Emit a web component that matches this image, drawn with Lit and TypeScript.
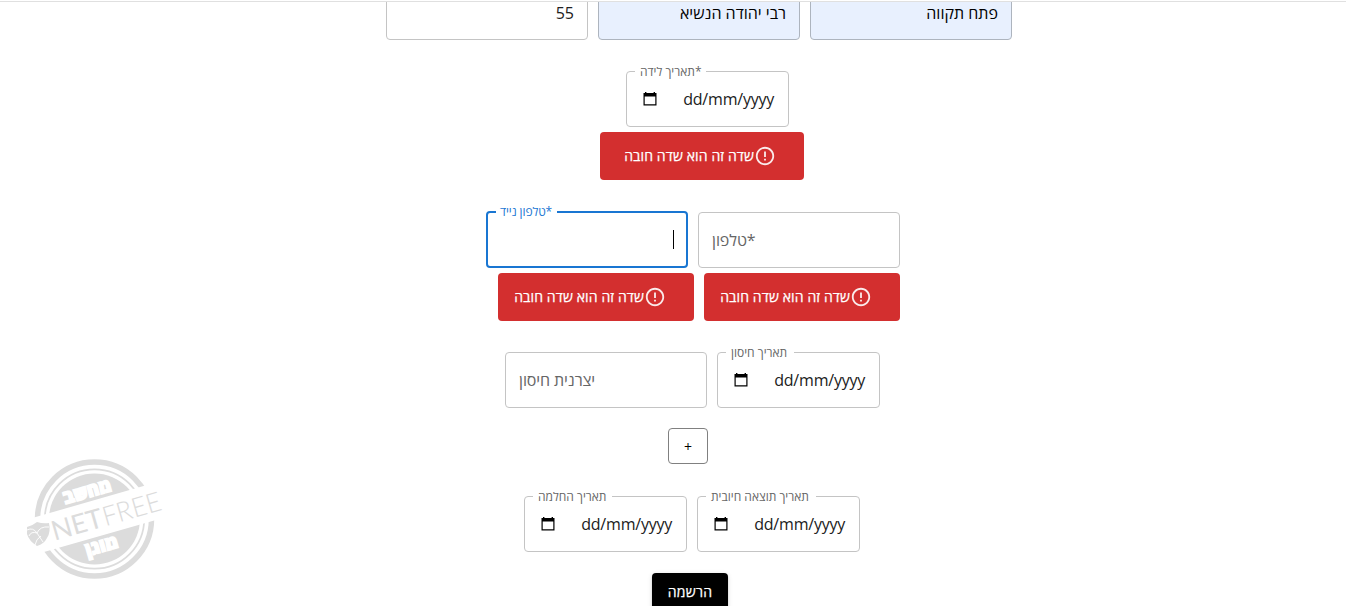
import { LitElement, html, svg, css, nothing } from "lit";
import { customElement, property } from "lit/decorators.js";

@customElement("form-field")
class FormField extends LitElement {
  @property() label = "";
  @property() value = "";
  @property() kind = "text";
  @property() gap = "";
  static styles = css`
    :host { display: block; }
    .box { position: relative; box-sizing: border-box; width: 202px; height: 56px; border: 1px solid #c4c4c4; border-radius: 4px; display: flex; align-items: center; padding: 0 13px; font-size: 16px; color: #212121; background: #fff; }
    .value { margin-left: auto; direction: rtl; line-height: 24px; white-space: nowrap; padding-top: 1px; }
    .filled { background: #e8f0fe; border-color: #adb4be; color: #000; }
    .date { width: 163px; padding: 0 14px 0 15px; }
    .date .value { letter-spacing: -.2px; margin-right: -.2px; direction: ltr; padding: 0 0 1px; }
    .focus { border: 2px solid #1976d2; height: 57px; margin-top: -1px; padding: 0 12px; }
    .caret { margin-left: auto; width: 1px; height: 19px; background: #000; }
    .tag { position: absolute; top: -8px; left: 8px; padding: 0 5px; background: #fff; font-size: 12px; line-height: 16px; color: #666; white-space: nowrap; direction: ltr; box-sizing: border-box; text-align: left; }
    .focus .tag { color: #1976d2; top: -9px; left: 8px; width: 61px; padding: 0 4px; letter-spacing: -.1px; }
    .placeholder { color: #666; white-space: nowrap; line-height: 24px; direction: ltr; letter-spacing: -.1px; padding-bottom: 1px; }
    svg { display: block; }
  `;
  render() {
    const date = this.kind === "date";
    return html`<div class="box ${this.kind}">
      ${this.label && this.kind !== "hint" ? html`<span class="tag" style=${`width:${this.gap}px`}>${this.label}</span>` : nothing}
      ${this.kind === "hint" ? html`<span class="placeholder">${this.label}</span>` : nothing}
      ${date ? html`<svg width="16" height="16" viewBox="0 0 16 16"><path fill="#000" fill-rule="evenodd" d="M3 1h1.4v1h7.2V1H13v1h1.5v12.4h-13V2H3zM2.7 5.4v7.8h10.6V5.4z"/></svg>` : nothing}
      ${this.kind === "focus" ? html`<i class="caret"></i>` : html`<span class="value">${date ? "dd/mm/yyyy" : this.value}</span>`}
    </div>`;
  }
}

@customElement("error-alert")
class ErrorAlert extends LitElement {
  static styles = css`
    :host { display: flex; box-sizing: border-box; width: 196px; height: 48px; border-radius: 4px; background: #d32f2f; color: #fff; align-items: center; justify-content: flex-end; padding-right: 28px; font-size: 14px; font-weight: 500; white-space: nowrap; }
    span { direction: rtl; line-height: 20px; letter-spacing: .12px; -webkit-text-stroke: .25px #fff; }
    svg { display: block; flex: none; opacity: .9; }
  `;
  render() {
    return html`<span>שדה זה הוא שדה חובה</span><svg width="22" height="22" viewBox="0 0 24 24" fill="#fff"><path d="M11 15h2v2h-2zm0-8h2v6h-2zm.99-5C6.47 2 2 6.48 2 12s4.47 10 9.99 10C17.52 22 22 17.52 22 12S17.52 2 11.99 2zM12 20c-4.42 0-8-3.58-8-8s3.58-8 8-8 8 3.58 8 8-3.58 8-8 8z"/></svg>`;
  }
}

const stamp = svg`
  <g fill="none" stroke="#dcdcdc"><circle cx="74.5" cy="69" r="57" stroke-width="5.5"/><circle cx="74.5" cy="69" r="49.7" stroke-width="1.7"/></g>
  <circle cx="74.5" cy="69" r="45.5" fill="#dcdcdc"/>
  <g transform="rotate(-16 74 69)">
    <rect x="4" y="51" width="142" height="36" fill="#fff"/>
    <text x="30" y="79" font-size="27" font-family="Lato" font-weight="400" fill="#dcdcdc" textLength="52" lengthAdjust="spacingAndGlyphs">NET</text>
    <text x="83" y="79" font-size="27" font-family="Lato" font-weight="300" fill="#dcdcdc" textLength="60" lengthAdjust="spacingAndGlyphs">FREE</text>
    <g fill="#fff" stroke="#fff" stroke-width="1.6" font-size="18.5" font-weight="800" font-family="Open Sans, Noto Sans" text-anchor="middle">
      <text x="75" y="47" textLength="49" lengthAdjust="spacingAndGlyphs">מחשב</text>
      <text x="74" y="103" textLength="33" lengthAdjust="spacingAndGlyphs">מוגן</text>
    </g>
  </g>
  <path d="M7 77Q12 76 17 72Q23 74 29 73Q31 82 27 88Q24 94 17 96Q9 91 7 84Z" fill="#dcdcdc"/>
  <path d="M7 80Q13 77 17 83Q20 76 29 77M17 83L23 92M17 83Q11 81 9 86M15 95Q16 89 21 86" fill="none" stroke="#fff" stroke-width=".9"/>`;

@customElement("app-root")
class AppRoot extends LitElement {
  static styles = css`
    :host { display: block; position: relative; width: 1346px; height: 606px; overflow: hidden; background: #fff; font-family: "Open Sans", "Noto Sans", sans-serif; }
    .bar { height: 1px; border-bottom: 1px solid #e0e0e0; position: relative; z-index: 2; background: #fff; }
    .page { display: flex; flex-direction: column; align-items: flex-start; margin-top: -18px; }
    .row { display: flex; gap: 10px; }
    .r0 { margin-left: 386px; }
    .r1 { margin: 31px 0 0 626px; }
    .a1 { margin: 5px 0 0 600px; }
    .a1 error-alert { width: 204px; }
    .r2 { margin: 32px 0 0 486px; }
    .a2 { margin: 5px 0 0 498px; }
    .r3 { margin: 31px 0 0 505px; }
    .r4 { margin: 32px 0 0 524px; }
    button { font: 500 14px "Open Sans", "Noto Sans", sans-serif; border-radius: 4px; box-sizing: border-box; padding: 0; flex: none; }
    .add { width: 40px; height: 36px; margin: 20px 0 0 668px; background: #fff; border: 1px solid #808080; color: #000; }
    .send { width: 76px; height: 37px; margin: 21px 0 0 652px; border: 0; background: #000; color: #fff; letter-spacing: .3px; -webkit-text-stroke: .25px #fff; box-shadow: 0 3px 1px -2px #0003, 0 2px 2px #0002, 0 1px 5px #0002; }
    .stamp { position: absolute; left: 20px; top: 450px; overflow: visible; }
  `;
  render() {
    return html`<div class="bar"></div>
      <div class="page">
        <div class="row r0"><form-field value="55"></form-field><form-field kind="filled" value="רבי יהודה הנשיא"></form-field><form-field kind="filled" value="פתח תקווה"></form-field></div>
        <div class="row r1"><form-field kind="date" label="תאריך לידה*" gap="71"></form-field></div>
        <div class="row a1"><error-alert></error-alert></div>
        <div class="row r2"><form-field kind="focus" label="טלפון נייד*" gap="61"></form-field><form-field kind="hint" label="טלפון*"></form-field></div>
        <div class="row a2"><error-alert></error-alert><error-alert></error-alert></div>
        <div class="row r3"><form-field kind="hint" label="יצרנית חיסון"></form-field><form-field kind="date" label="תאריך חיסון" gap="68"></form-field></div>
        <button class="add">+</button>
        <div class="row r4"><form-field kind="date" label="תאריך החלמה" gap="79"></form-field><form-field kind="date" label="תאריך תוצאה חיובית" gap="110"></form-field></div>
        <button class="send">הרשמה</button>
      </div>
      <svg class="stamp" width="160" height="140" viewBox="0 0 160 140">${stamp}</svg>`;
  }
}
